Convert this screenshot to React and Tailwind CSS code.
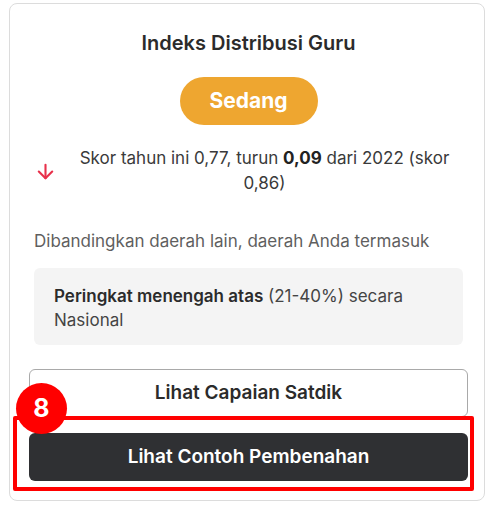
import { ArrowDown } from 'lucide-react'

export default function App() {
  return (
    <div className="min-h-[506px] w-[492px] bg-white pt-[3px] pl-[9px] font-['Inter','Noto_Sans',sans-serif]">
      <div className="w-[476px] rounded-lg border border-[#dcdcdc] pt-[25px] pb-[19px] pl-[19px] pr-[16px]">
        <h2 className="text-center text-[20px] leading-[28px] font-semibold text-[#2b2b2b]">Indeks Distribusi Guru</h2>

        <div className="mt-[20px] flex justify-center">
          <span className="flex h-[48px] w-[138px] items-center justify-center rounded-full bg-[#eea630] text-[21px] font-bold text-white">
            Sedang
          </span>
        </div>

        <div className="mt-[21px] flex items-center">
          <div className="flex w-[40px] pl-[5px]">
            <ArrowDown size={23} strokeWidth={2.2} className="text-[#e8314b]" />
          </div>
          <p className="flex-1 pl-[4px] pr-[12px] text-center text-[17px] leading-[25px] text-[#3a3a3a]">
            Skor tahun ini 0,77, turun <span className="font-bold text-[#222]">0,09</span> dari 2022 (skor 0,86)
          </p>
        </div>

        <p className="mt-[33px] pl-[5px] text-[17px] leading-[24px] text-[#5f5f5f]">
          Dibandingkan daerah lain, daerah Anda termasuk
        </p>

        <div className="mx-[5px] mt-[15px] rounded-md bg-[#f4f4f4] px-[20px] pt-[16px] pb-[13px] text-[17px] leading-[24px] text-[#444]">
          <span className="font-semibold text-[#2b2b2b]">Peringkat menengah atas</span> (21-40%) secara Nasional
        </div>

        <div className="mt-[24px] flex flex-col gap-[16px]">
          <button className="flex h-[48px] w-full items-center justify-center rounded-md border border-[#a9a9a9] bg-white text-[19px] font-semibold text-[#2b2b2b]">
            Lihat Capaian Satdik
          </button>
          <div className="relative">
            <button className="flex h-[48px] w-full items-center justify-center rounded-md bg-[#2f3033] text-[19px] font-semibold text-white">
              Lihat Contoh Pembenahan
            </button>
            <div className="pointer-events-none absolute top-[-17px] right-[-6px] bottom-[-10px] left-[-16px] rounded-[2px] border-4 border-[#ff0000]" />
            <div className="absolute top-[-50px] left-[-13px] flex h-[51px] w-[51px] items-center justify-center rounded-full bg-[#ff0000] text-[25px] font-bold text-white">
              8
            </div>
          </div>
        </div>
      </div>
    </div>
  )
}
